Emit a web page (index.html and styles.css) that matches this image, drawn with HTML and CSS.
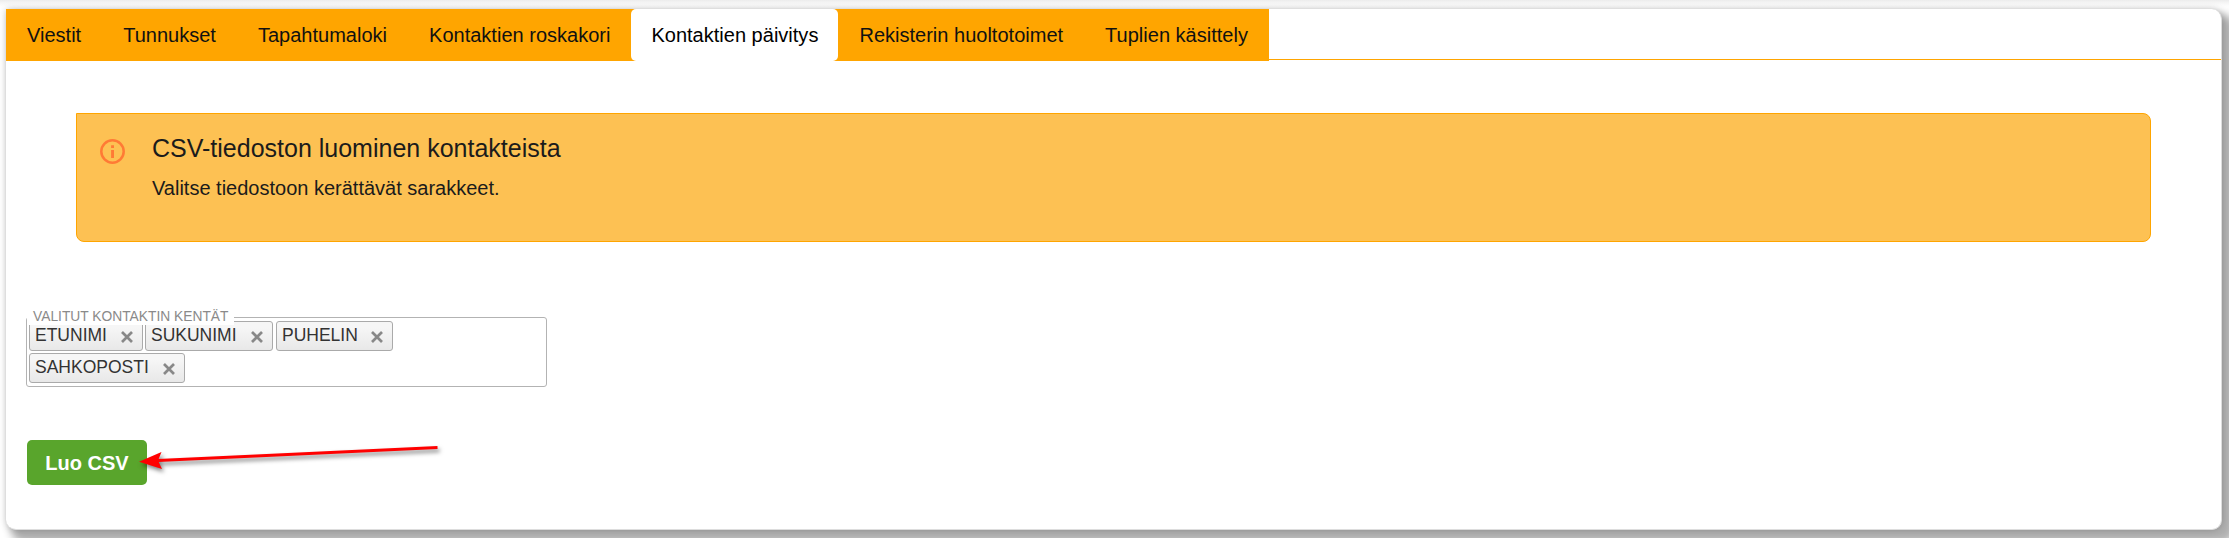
FILE: index.html
```html
<!DOCTYPE html>
<html lang="fi">
<head>
<meta charset="utf-8">
<title>Kontaktien päivitys</title>
<link rel="stylesheet" href="styles.css">
</head>
<body>
<main class="panel">
  <nav class="tabs">
    <a class="tab">Viestit</a>
    <a class="tab">Tunnukset</a>
    <a class="tab">Tapahtumaloki</a>
    <a class="tab">Kontaktien roskakori</a>
    <a class="tab active"><span>Kontaktien päivitys</span></a>
    <a class="tab">Rekisterin huoltotoimet</a>
    <a class="tab">Tuplien käsittely</a>
    <span class="tab-line"></span>
  </nav>
  <section class="notice">
    <svg class="notice-icon" width="26" height="26" viewBox="0 0 26 26">
      <circle cx="12.500" cy="12.500" r="11.200" fill="none" stroke="#ff7a35" stroke-width="2.500"/>
      <path d="M11.100 6.300h2.900v2.700h-2.900zM11.100 11h2.900v8h-2.900z" fill="#ff7a35"/>
    </svg>
    <div>
      <h1 class="notice-title">CSV-tiedoston luominen kontakteista</h1>
      <p class="notice-text">Valitse tiedostoon kerättävät sarakkeet.</p>
    </div>
  </section>
  <div class="field">
    <span class="field-label">VALITUT KONTAKTIN KENTÄT</span>
    <div class="chip chip-first">ETUNIMI<svg class="x" viewBox="0 0 14 14"><path d="M2 2l10 10M12 2L2 12"/></svg></div>
    <div class="chip chip-second">SUKUNIMI<svg class="x" viewBox="0 0 14 14"><path d="M2 2l10 10M12 2L2 12"/></svg></div>
    <div class="chip chip-third">PUHELIN<svg class="x" viewBox="0 0 14 14"><path d="M2 2l10 10M12 2L2 12"/></svg></div>
    <div class="chip chip-fourth">SAHKOPOSTI<svg class="x" viewBox="0 0 14 14"><path d="M2 2l10 10M12 2L2 12"/></svg></div>
  </div>
  <button class="create">Luo CSV</button>
  <svg class="arrow" width="320" height="50" viewBox="130 435 320 50">
    <path d="M158 460.5L437.500 447.500" stroke="#f00" stroke-width="3"/>
    <path d="M139 461.700L161.500 452L158 460.500L162 469Z" fill="#f00"/>
  </svg>
</main>
</body>
</html>
```
FILE: styles.css
```css
* { box-sizing: border-box; }
body {
  margin: 0;
  height: 538px;
  overflow: hidden;
  padding: 9px 7px 8px 6px;
  background: linear-gradient(#ececec, #f6f6f6 3px, #fff 7px);
  font-family: "Liberation Sans", Arial, sans-serif;
  color: #111;
}
.panel {
  position: relative;
  height: 521px;
  background: #fff;
  border-radius: 10px;
  border-top-left-radius: 0;
  border-right: 1px solid #ddd;
  border-bottom: 1px solid #ddd;
  box-shadow: 0 0 7px rgba(0, 0, 0, .22), 9px 9px 8px 4px #b0b0b0;
}
.tabs { display: flex; height: 52px; }
.tab {
  flex: none;
  padding: 0 21px;
  background: #ffa500;
  font-size: 20px;
  letter-spacing: .01px;
  line-height: 52px;
  white-space: nowrap;
}
.tab.active { padding: 0; }
.tab.active span {
  display: block;
  width: 207px;
  padding: 0 20px;
  background: #fff;
  border-radius: 5px;
  color: #000;
}
.tab-line { flex: 1; height: 51px; border-bottom: 1px solid #ffa500; }
.notice {
  display: flex;
  gap: 23px;
  margin: 52px 70px 0;
  height: 129px;
  padding: 25px 23px;
  background: #fdc153;
  border: 1px solid #ffa500;
  border-radius: 0 8px 8px 8px;
  color: #1b1b1b;
}
.notice-icon { flex: none; }
.notice-title { margin: -5px 0 0 3px; font-size: 25px; font-weight: 400; line-height: 28px; }
.notice-text { margin: 14px 0 0 3px; font-size: 20px; line-height: 24px; }
.field {
  position: relative;
  display: flex;
  flex-wrap: wrap;
  align-content: flex-start;
  gap: 2px;
  width: 521px;
  height: 70px;
  margin: 75px 0 0 20px;
  padding: 3px 2px;
  border: 1px solid #b3b3b3;
  border-radius: 3px;
}
.field-label {
  position: absolute;
  left: 0;
  top: -10px;
  width: 207px;
  height: 17px;
  padding-left: 6px;
  background: #fff;
  color: #8a8a8a;
  font-size: 13.8px;
  line-height: 17px;
  white-space: nowrap;
}
.chip {
  display: flex;
  align-items: center;
  justify-content: space-between;
  height: 30px;
  padding: 0 8px 1px 5px;
  border: 1px solid #aaa;
  border-radius: 3px;
  background: linear-gradient(#f6f6f6 20%, #e8e8e8);
  color: #333;
  font-size: 17.5px;
}
.chip-first { width: 114px; }
.chip-second { width: 128px; }
.chip-third { width: 117px; margin-left: 1px; }
.chip-fourth { width: 156px; }
.x { width: 14px; height: 14px; position: relative; top: 1px; fill: none; stroke: #888; stroke-width: 2.7; }
.create {
  display: block;
  width: 120px;
  height: 45px;
  margin: 53px 0 0 21px;
  padding: 1px 0 0;
  border: 0;
  border-radius: 5px;
  background: #59a52c;
  color: #fff;
  font: bold 20px "Liberation Sans", Arial, sans-serif;
}
.arrow { position: absolute; left: 124px; top: 426px; filter: drop-shadow(2px 3px 2px rgba(0, 0, 0, .5)); }
```
